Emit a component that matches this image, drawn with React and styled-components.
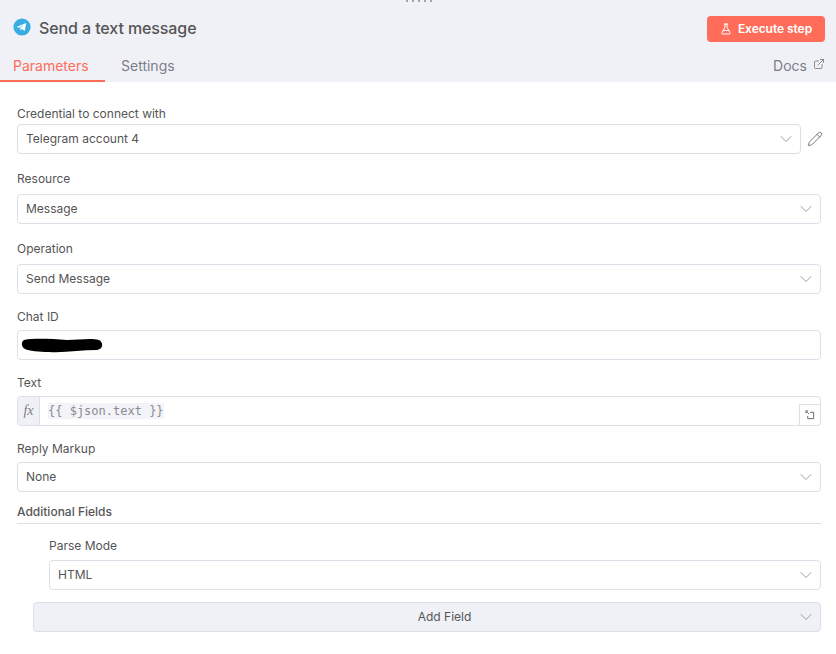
import styled, { createGlobalStyle } from 'styled-components';
import { ChevronDown, ExternalLink, FlaskConical, Pencil } from 'lucide-react';

const GlobalStyle = createGlobalStyle`
  html, body {
    margin: 0;
    padding: 0;
    background: #fff;
  }
  * {
    box-sizing: border-box;
  }
`;

const Panel = styled.div`
  width: 836px;
  height: 654px;
  position: relative;
  overflow: hidden;
  background: #fff;
  font-family: Inter, "Liberation Sans", sans-serif;
  color: #555;
`;

const DragDots = styled.div`
  position: absolute;
  top: 0;
  left: 406px;
  display: flex;
  gap: 4px;

  i {
    width: 2px;
    height: 2px;
    border-radius: 50%;
    background: #8a8a92;
  }
`;

const Header = styled.div`
  height: 82px;
  background: #f0f1f7;
  display: flex;
  flex-direction: column;
`;

const TitleRow = styled.div`
  height: 50px;
  padding: 16px 11px 0 13px;
  display: flex;
  justify-content: space-between;
  align-items: flex-start;
`;

const TitleGroup = styled.div`
  display: flex;
  align-items: center;
  gap: 8px;
  height: 24px;
`;

const Title = styled.div`
  font-size: 16px;
  font-weight: 500;
  letter-spacing: -0.1px;
  color: #555;
`;

const LogoMark = styled.svg`
  margin-top: -2px;
`;

const ExecuteButton = styled.div`
  width: 118px;
  height: 26px;
  padding-bottom: 1px;
  border-radius: 4px;
  background: #ff6d5a;
  color: #fff;
  font-size: 12px;
  font-weight: 600;
  letter-spacing: -0.05px;
  display: flex;
  align-items: center;
  justify-content: center;
  gap: 6px;
`;

const Tabs = styled.div`
  height: 32px;
  display: flex;
  justify-content: space-between;
`;

const TabGroup = styled.div`
  display: flex;
`;

const Tab = styled.div`
  padding: 7px 0 0 ${(p) => (p.$active ? 13 : 16)}px;
  width: ${(p) => p.$width}px;
  font-size: 14px;
  color: ${(p) => (p.$active ? '#ff6d5a' : '#7d7d87')};
  border-bottom: 2px solid ${(p) => (p.$active ? '#ff6d5a' : 'transparent')};
`;

const Docs = styled.div`
  display: flex;
  gap: 6px;
  padding: 7px 11px 0 0;
  font-size: 14px;
  color: #7d7d87;

  svg {
    margin-top: 1px;
    color: #6b6b73;
  }
`;

const Form = styled.div`
  padding: 23px 15px 0 17px;
`;

const Label = styled.div`
  font-size: 12px;
  line-height: 18px;
  color: #555;
  margin-bottom: ${(p) => p.$gap ?? 6}px;
`;

const Field = styled.div`
  margin-bottom: ${(p) => p.$gap ?? 16}px;
  margin-left: ${(p) => p.$indent ?? 0}px;
`;

const FieldLine = styled.div`
  display: flex;
  align-items: center;
  gap: 6px;
`;

const Input = styled.div`
  flex: 1;
  height: 30px;
  position: relative;
  display: flex;
  align-items: center;
  padding: 0 8px 1px;
  background: #fff;
  border: 1px solid #dbdfe7;
  border-radius: 4px;
  font-size: 12px;
  color: #555;
`;

const Caret = styled(ChevronDown)`
  position: absolute;
  right: 4px;
  top: 4px;
  color: #8a8a92;
`;

const EditIcon = styled(Pencil)`
  color: #5f5f67;
  margin-right: -2px;
`;

const Redacted = styled.svg`
  position: absolute;
  left: 3px;
  top: 7px;
`;

const ExpressionBox = styled.div`
  height: 30px;
  position: relative;
  display: flex;
  border: 1px solid #dbdfe7;
  border-radius: 4px;
  background: #fff;
`;

const FxTag = styled.div`
  width: 22px;
  background: #f0f1f7;
  border-right: 1px solid #dbdfe7;
  border-radius: 3px 0 0 3px;
  display: flex;
  align-items: center;
  justify-content: center;
  font-family: "Liberation Serif", serif;
  font-style: italic;
  font-size: 14px;
  color: #7d7d87;
`;

const ExpressionText = styled.div`
  display: flex;
  align-items: center;
  padding-left: 8px;
  font-family: "DejaVu Sans Mono", "Liberation Mono", monospace;
  font-size: 12px;
  color: #8a8a92;

  span {
    background: #f3f4f8;
    line-height: 16px;
  }
`;

const ExpandButton = styled.div`
  position: absolute;
  right: -1px;
  bottom: -1px;
  width: 22px;
  height: 22px;
  background: #fff;
  border: 1px solid #dbdfe7;
  border-radius: 0 0 4px 0;
  display: flex;
  align-items: center;
  justify-content: center;
  color: #6b6b73;
`;

const SectionTitle = styled.div`
  font-size: 12px;
  font-weight: 500;
  line-height: 18px;
  color: #555;
  padding-bottom: 2px;
  border-bottom: 1px solid #dbdfe7;
  margin-bottom: 13px;
`;

const AddField = styled.div`
  height: 30px;
  margin-left: 16px;
  padding: 0 0 1px 35px;
  position: relative;
  display: flex;
  align-items: center;
  justify-content: center;
  background: #f0f1f7;
  border: 1px solid #dbdfe7;
  border-radius: 4px;
  font-size: 12px;
  color: #555;
`;

const TelegramLogo = () => (
  <LogoMark width="18" height="18" viewBox="0 0 18 18">
    <circle cx="9" cy="9" r="8.6" fill="#37aee2" />
    <path d="M3.4 8.9 L13.2 5 L11.7 12.9 L8.9 11 L7.4 12.4 L7.2 10.1 L11.2 6.9 L6.2 9.8 Z" fill="#fff" />
  </LogoMark>
);

const ExpandIcon = () => (
  <svg width="10" height="10" viewBox="0 0 11 11" fill="none" stroke="currentColor" strokeWidth="1.1">
    <path d="M1 1 L4.5 4.5 M1 1 H3.5 M1 1 V3.5" />
    <path d="M5.5 2.5 H9.5 V9.5 H3 V6.5" />
  </svg>
);

const SelectField = ({ label, value, indent, gap, labelGap }) => (
  <Field $indent={indent} $gap={gap}>
    <Label $gap={labelGap}>{label}</Label>
    <Input>
      {value}
      <Caret size={20} strokeWidth={1} />
    </Input>
  </Field>
);

const App = () => (
  <Panel>
    <GlobalStyle />
    <DragDots>
      <i /><i /><i /><i /><i />
    </DragDots>
    <Header>
      <TitleRow>
        <TitleGroup>
          <TelegramLogo />
          <Title>Send a text message</Title>
        </TitleGroup>
        <ExecuteButton>
          <FlaskConical size={12} strokeWidth={2} />
          Execute step
        </ExecuteButton>
      </TitleRow>
      <Tabs>
        <TabGroup>
          <Tab $active $width={105}>Parameters</Tab>
          <Tab $width={90}>Settings</Tab>
        </TabGroup>
        <Docs>
          Docs
          <ExternalLink size={12} strokeWidth={1.5} />
        </Docs>
      </Tabs>
    </Header>
    <Form>
      <Field>
        <Label $gap={1}>Credential to connect with</Label>
        <FieldLine>
          <Input>
            Telegram account 4
            <Caret size={20} strokeWidth={1} />
          </Input>
          <EditIcon size={16} strokeWidth={1.25} />
        </FieldLine>
      </Field>
      <SelectField label="Resource" value="Message" />
      <SelectField label="Operation" value="Send Message" gap={14} />
      <Field $gap={14}>
        <Label $gap={4}>Chat ID</Label>
        <Input>
          <Redacted width="82" height="15" viewBox="0 0 82 15">
            <path d="M3 2 C14 0 30 1 46 2 C58 2 70 0 78 2 C83 5 82 11 76 12 C60 12 44 15 28 14 C18 14 8 13 4 11 C0 9 0 4 3 2 Z" fill="#000" />
          </Redacted>
        </Input>
      </Field>
      <Field $gap={14}>
        <Label $gap={4}>Text</Label>
        <ExpressionBox>
          <FxTag>fx</FxTag>
          <ExpressionText><span>{'{{ $json.text }}'}</span></ExpressionText>
          <ExpandButton><ExpandIcon /></ExpandButton>
        </ExpressionBox>
      </Field>
      <SelectField label="Reply Markup" value="None" labelGap={4} gap={11} />
      <SectionTitle>Additional Fields</SectionTitle>
      <SelectField label="Parse Mode" value="HTML" indent={32} labelGap={5} gap={12} />
      <AddField>
        Add Field
        <Caret size={20} strokeWidth={1} />
      </AddField>
    </Form>
  </Panel>
);

export default App;
